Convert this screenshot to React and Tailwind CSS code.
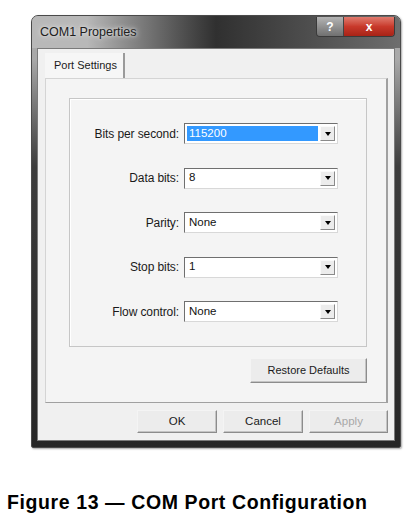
import React from "react";

const rows = [
  { label: "Bits per second:", value: "115200", selected: true },
  { label: "Data bits:", value: "8" },
  { label: "Parity:", value: "None" },
  { label: "Stop bits:", value: "1" },
  { label: "Flow control:", value: "None" },
];

function Combo({ value, selected }) {
  return (
    <div className="flex h-[21px] w-[154px] items-stretch border border-t-[#6f6f6f] border-l-[#6f6f6f] border-r-[#d8d8d8] border-b-[#d8d8d8] bg-white p-[2px] text-[11.5px]">
      <div
        className={
          selected
            ? "flex flex-1 items-center bg-[#3399ff] pl-[2px] text-white"
            : "flex flex-1 items-center pl-[2px] text-[#111]"
        }
      >
        {value}
      </div>
      <div className="ml-[2px] flex w-[15px] items-center justify-center border border-t-[#fafafa] border-l-[#fafafa] border-r-[#8a8a8a] border-b-[#8a8a8a] bg-[#ececec]">
        <div className="h-0 w-0 border-x-[3.5px] border-t-[4px] border-x-transparent border-t-black" />
      </div>
    </div>
  );
}

function Button({ children, disabled, className }) {
  return (
    <div
      className={
        "flex items-center justify-center border border-t-[#f4f4f4] border-l-[#f4f4f4] border-r-[#8c8c8c] border-b-[#8c8c8c] bg-[#ececec] shadow-[inset_-1px_-1px_0_#c4c4c4] " +
        (disabled ? "text-[#a8a8a8] " : "text-[#1a1a1a] ") +
        className
      }
    >
      {children}
    </div>
  );
}

export default function App() {
  return (
    <div className="relative h-[519px] w-[413px] overflow-hidden bg-white font-['Liberation_Sans',Arial,sans-serif]">
      <div className="pl-[31px] pt-[15px]">
        {/* window */}
        <div className="flex h-[433px] w-[370px] flex-col rounded-t-[7px] rounded-b-[2px] border border-[#4a4a4a] bg-linear-to-b from-[#a9a9a9] from-10% via-[#3c3c3c] via-35% to-[#262626] shadow-[1px_1px_2px_rgba(0,0,0,0.35)]">
          {/* title bar */}
          <div className="relative flex h-[32px] items-center rounded-t-[6px] bg-linear-to-r from-[#b8b8b8] from-15% via-[#303030] via-50% to-[#6e6e6e] pl-[8px]">
            <span className="text-[12.5px] text-[#202020] [text-shadow:0_0_6px_#e8e8e8,0_0_3px_#e0e0e0]">
              COM1 Properties
            </span>
            <div className="absolute right-[5px] top-[1px] flex overflow-hidden rounded-b-[4px] border border-[#3a3a3a] border-t-0">
              <div className="flex h-[19px] w-[27px] items-center justify-center border-r border-[#444] bg-linear-to-b from-[#b4b4b4] to-[#707070] text-[12px] font-bold text-white">
                ?
              </div>
              <div className="flex h-[19px] w-[50px] items-center justify-center bg-linear-to-b from-[#e07a6e] via-[#c8392b] to-[#a82316] text-[12px] font-bold text-white">
                x
              </div>
            </div>
          </div>

          {/* client area */}
          <div className="mx-[5px] mb-[6px] flex flex-1 flex-col border border-[#7a7a7a] bg-[#f0f0f0] text-[11.5px]">
            {/* tab strip */}
            <div className="ml-[7px] mt-[4px] flex h-[25px]">
              <div className="flex items-center border-r-2 border-[#9a9a9a] bg-[#f6f6f6] pl-[9px] pr-[6px] text-[11px] text-[#1a1a1a]">
                Port Settings
              </div>
            </div>

            {/* tab panel */}
            <div className="ml-[7px] flex h-[325px] w-[343px] flex-col border border-[#d4d4d4] border-r-[#a0a0a0] border-r-2 border-b-[#a0a0a0] bg-[#f4f4f4]">
              {/* group box */}
              <div className="ml-[23px] mt-[19px] flex h-[249px] w-[298px] flex-col gap-[23.5px] border border-[#c6c6c6] pt-[24px] shadow-[inset_1px_1px_0_#ffffff]">
                {rows.map((r) => (
                  <div key={r.label} className="flex items-center">
                    <div className="w-[110px] pr-[1px] text-right text-[12px] tracking-[-0.1px] text-[#1a1a1a]">
                      {r.label}
                    </div>
                    <div className="ml-[4px]">
                      <Combo value={r.value} selected={r.selected} />
                    </div>
                  </div>
                ))}
              </div>

              <div className="mr-[19px] mt-[11px] flex justify-end">
                <Button className="h-[25px] w-[117px] text-[11px]">Restore Defaults</Button>
              </div>
            </div>

            {/* dialog buttons */}
            <div className="mr-[6px] mt-[7px] flex justify-end gap-[6px]">
              <Button className="h-[23px] w-[80px]">OK</Button>
              <Button className="h-[23px] w-[80px]">Cancel</Button>
              <Button className="h-[23px] w-[79px]" disabled>
                Apply
              </Button>
            </div>
          </div>
        </div>
      </div>

      <div className="pl-[7px] pt-[45px] text-[19.5px] font-bold leading-none tracking-[0.6px] text-black">
        Figure 13 — COM Port Configuration
      </div>
    </div>
  );
}
